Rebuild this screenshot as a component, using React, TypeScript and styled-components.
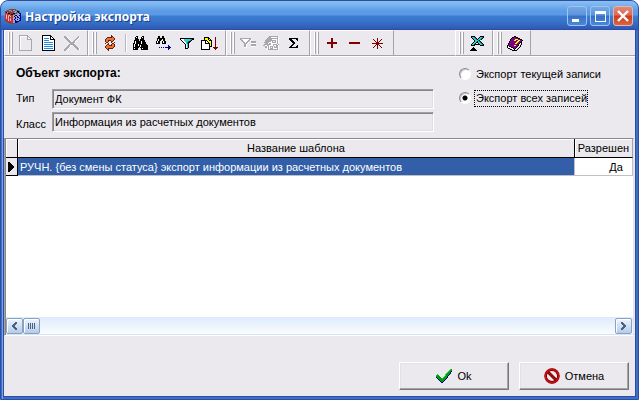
import React from "react";
import styled, { createGlobalStyle } from "styled-components";

const GlobalStyle = createGlobalStyle`
  * { box-sizing: border-box; }
  body { margin: 0; background: #fff; }
  body, button, input { font-family: "Liberation Sans", Arial, sans-serif; font-size: 11px; color: #000; }
`;

const face = "#ebe9ed";

const Window = styled.main`
  display: flex;
  flex-direction: column;
  min-height: 100vh;
  border: 1px solid #2b4da8;
  border-radius: 8px 8px 0 0;
  background: linear-gradient(90deg, #3f6fc4 0 1px, #78a4e0 1px 2px, #3f6fc4 2px);
  overflow: hidden;
`;
const TitleBar = styled.header`
  display: flex;
  align-items: center;
  gap: 4px;
  height: 29px;
  padding: 1px 5px 0 4px;
  background: linear-gradient(#8cc0f0 0, #78b4ee 4px, #5c9ae6 10px, #5c9ae6 14px, #3b7dd2 15px, #3874ca 20px, #2d56b2 29px);
`;
const Title = styled.h1`
  flex: 1;
  margin: 0;
  padding-top: 2px;
  font: bold 12px/18px "Noto Sans", sans-serif;
  color: #fff;
  text-shadow: 1px 1px 0 #1c3f8c;
`;
const Captions = styled.div`
  display: flex;
  gap: 3px;
`;
const CaptionButton = styled.button<{ $close?: boolean }>`
  width: 20px;
  height: 20px;
  padding: 0;
  border: 1px solid ${(p) => (p.$close ? "#e8b4b0" : "#9cc4f4")};
  border-radius: 3px;
  background: ${(p) =>
    p.$close
      ? "linear-gradient(#dc8a80, #e06a50 45%, #cc3c1c 50%, #dc6444)"
      : "linear-gradient(#74a8e4, #5c94dc 45%, #3470c8 50%, #4c88d8)"};
  svg { display: block; }
`;
const Client = styled.div`
  flex: 1;
  display: flex;
  flex-direction: column;
  margin: 0 3px 3px;
  background: ${face};
  outline: 1px solid #2b4da8;
`;
const ToolBar = styled.nav`
  display: flex;
  height: 27px;
  border-bottom: 1px solid #fff;
  box-shadow: inset 0 -1px #a4a3a8;
`;
const Group = styled.div`
  display: flex;
  align-items: center;
  height: 26px;
  padding: 0 4px 0 3px;
  border-left: 1px solid #fff;
  border-right: 1px solid #a4a3a8;
  border-top: 1px solid #fff;
  border-bottom: 1px solid #a4a3a8;
`;
const Grip = styled.span`
  width: 6px;
  height: 22px;
  background: linear-gradient(90deg, #fff 0 1px, #a4a3a8 1px 2px, ${face} 2px 3px, #fff 3px 4px, #a4a3a8 4px 5px, transparent 5px);
`;
const Divider = styled.span`
  width: 8px;
  height: 18px;
  background: linear-gradient(90deg, transparent 4px, #b8b7bc 4px 5px, #fff 5px 6px, transparent 6px);
`;
const Tool = styled.button`
  display: grid;
  place-items: center;
  width: 23px;
  height: 22px;
  padding: 0;
  border: 0;
  background: none;
`;
const Spacer = styled.span`
  width: 61px;
`;
const Form = styled.section`
  display: flex;
  justify-content: space-between;
  padding: 8px 22px 6px 12px;
`;
const Target = styled.fieldset`
  flex: 0 1 418px;
  display: grid;
  grid-template-columns: 36px 1fr;
  row-gap: 3px;
  margin: 0;
  padding: 0;
  border: 0;
`;
const Legend = styled.legend`
  padding: 0 0 8px;
  font-weight: bold;
  font-size: 12px;
  line-height: 16px;
`;
const Label = styled.label`
  line-height: 18px;
  &:last-of-type { padding-top: 4px; line-height: 16px; }
`;
const Field = styled.input`
  min-width: 0;
  height: 20px;
  padding: 0 2px;
  border: 1px solid;
  border-color: #a09fa4 #fff #fff #a09fa4;
  box-shadow: inset 1px 1px #86858c, inset -1px -1px #dcdfe4;
  background: ${face};
  outline: 0;
`;
const Choices = styled.div`
  display: flex;
  flex-direction: column;
  gap: 8px;
  width: 154px;
  padding-top: 1px;
`;
const Choice = styled.label`
  display: flex;
  align-items: center;
  gap: 4px;
  height: 16px;
  white-space: nowrap;
`;
const Radio = styled.input`
  appearance: none;
  flex: none;
  width: 12px;
  height: 12px;
  margin: 0;
  border: 1px solid;
  border-color: #8c8b90 #fff #fff #8c8b90;
  border-radius: 50%;
  background: #fff;
  box-shadow: inset 1px 1px #c4c3c8;
  &:checked { background: radial-gradient(circle, #000 0 2px, #fff 3px); }
`;
const ChoiceText = styled.span<{ $focus?: boolean }>`
  padding: 0 0 0 1px;
  line-height: 15px;
  outline: ${(p) => (p.$focus ? "1px dotted #000" : "0")};
`;
const GridPanel = styled.section`
  flex: 1;
  display: flex;
  flex-direction: column;
  justify-content: space-between;
  margin-right: 1px;
  border-top: 1px solid #8a898f;
  border-left: 1px solid #a4a3a8;
  border-bottom: 1px solid #fff;
  border-right: 1px solid #e0e3ea;
  box-shadow: inset 1px 0 #86858c;
  background: #fff;
  padding-left: 1px;
`;
const Table = styled.table`
  width: 100%;
  table-layout: fixed;
  border-collapse: separate;
  border-spacing: 0;
`;
const Head = styled.th<{ $w?: number }>`
  width: ${(p) => (p.$w ? `${p.$w}px` : "auto")};
  height: 19px;
  padding: 0;
  font-weight: normal;
  line-height: 16px;
  white-space: nowrap;
  overflow: hidden;
  background: ${face};
  border-bottom: 1px solid #000;
  border-right: 1px solid #000;
  box-shadow: inset 1px 1px #fff;
  &:last-child { border-right-color: #a4a3a8; }
`;
const Cell = styled.td<{ $selected?: boolean; $marker?: boolean; $center?: boolean }>`
  height: 18px;
  padding: ${(p) => (p.$center ? "0 0 0 25px" : p.$marker ? "0 0 0 2px" : "0 2px")};
  line-height: 16px;
  white-space: nowrap;
  text-align: ${(p) => (p.$center ? "center" : "left")};
  color: ${(p) => (p.$selected ? "#fff" : "#000")};
  background: ${(p) => (p.$selected ? "#325fa8" : p.$marker ? face : "#fff")};
  border-bottom: 1px solid ${(p) => (p.$marker ? "#000" : "#c0c0c4")};
  border-right: 1px solid ${(p) => (p.$marker ? "#000" : "#c0c0c4")};
  svg { display: block; }
`;
const ScrollBar = styled.div`
  display: flex;
  height: 18px;
  padding: 1px 1px 1px 0;
  border-bottom: 1px solid #d4e4f6;
  background: linear-gradient(#dcebfb, #fafcff);
`;
const ScrollButton = styled.button`
  display: grid;
  place-items: center;
  width: 17px;
  height: 16px;
  padding: 0;
  border: 1px solid #86a2c4;
  border-radius: 2px;
  background: linear-gradient(#eef5fd, #b4cce8);
  box-shadow: inset 1px 1px #fff;
  &:last-child { margin-left: auto; }
`;
const Footer = styled.footer`
  display: flex;
  justify-content: flex-end;
  gap: 10px;
  padding: 26px 6px 6px;
`;
const Action = styled.button`
  display: flex;
  align-items: center;
  justify-content: center;
  gap: 5px;
  width: 110px;
  height: 28px;
  padding: 0;
  border: 1px solid;
  border-color: #fff #78777e #78777e #fff;
  box-shadow: inset -1px -1px #a4a3a8, inset 1px 1px #dfe2e7;
  background: ${face};
`;

const palette: Record<string, string> = {
  k: "#000000", w: "#ffffff", g: "#a8a7ac", b: "#1e8ce8", n: "#000090", o: "#f0702c", O: "#5c2410",
  r: "#800000", y: "#ffff00", c: "#30d0d0", t: "#007c80", p: "#800088", l: "#d0d0d0", G: "#009c10",
  L: "#20d828", R: "#d82828", d: "#585858", s: "#98a4c8", q: "#a02c34", Q: "#e88880", z: "#4d6185",
};

/** Draws small bitmap glyphs; every letter is a palette colour. */
function Glyph({ rows }: { rows: string[] }) {
  const w = Math.max(...rows.map((r) => r.length));
  return (
    <svg width={w} height={rows.length} shapeRendering="crispEdges" aria-hidden="true">
      {rows.flatMap((row, y) =>
        [...row].map((ch, x) =>
          palette[ch] ? <rect key={`${x}-${y}`} x={x} y={y} width="1" height="1" fill={palette[ch]} /> : null
        )
      )}
    </svg>
  );
}

const blank = [
  "ggggggggg....", "gwwwwwwwgg...", "gw......g.g..", "gw......gwwg.", "gw......ggggg", "gw..........g",
  "gw..........g", "gw..........g", "gw..........g", "gw..........g", "gw..........g", "gw..........g",
  "gw..........g", "gw..........g", "gw..........g", "ggggggggggggg",
];
const page = [
  "kkkkkkkkk....", "kwwwwwwwkk...", "kwwwwwwwkwk..", "kwbbbbbwkwwk.", "kwwwwwwwkkkkk", "kwbbbbbwwwwwk",
  "kwwwwwwwwwwwk", "kwbbbbbbbbbwk", "kwwwwwwwwwwwk", "kwbbbbbbbbbwk", "kwwwwwwwwwwwk", "kwbbbbbbbbbwk",
  "kwwwwwwwwwwwk", "kwbbbbbbbbbwk", "kwwwwwwwwwwwk", "kkkkkkkkkkkkk",
];
const remove = [
  "gg............g.", "gggw.........ggw", ".gggw.......ggw.", "..gggw.....ggw..", "...gggw...ggw...", "....gggw.ggw....",
  ".....ggggggw....", "......ggggw.....", ".....gggggg.....", "....ggww.ggg....", "...gggw...ggg...", "..gggw.....ggg..",
  ".gggw.......gggw", "gggw.........ggw", "ggw.............",
];
const refresh = [
  "......O...", "......OO..", "..OOOOOoO.", ".OoooooooO", "OooooooooO", "OooOOOooO.", "OooO..OO..", ".OO...O..O",
  "O..O...OO.", "..OO..OooO", ".OooOOOooO", "OooooooooO", "OoooooooO.", ".OoOOOOO..", "..OO......", "...O......",
];
const binoculars = [
  "...kk....kk....", "..kwk...kwk....", "..kkk...kkk....", "..kkkk.kkkk....", ".kkkkk.kkkkk...", ".kwkkkkkwkkk...",
  ".kwkkkkkwkkkk..", "kkwkkkkkwkkkk..", "kwkkkwkkkkkkkk.", "kwkkkwkwkkkkkkk", "kwkkkkkwkkkkkkk", "kkkkkk.kkkkkkkk",
  "kwkkk...kwkkkkk", "kkkkk...kkkkkkk",
];
const findNext = [
  "..kk..kk.......", "..kk..kk.......", ".kkkkkkkk......", ".kwkkkwkk......", ".kwkk.wkk......", "kwkk..kwkk.....",
  "kwkk..kwkk.....", "kkkk..kkkk.....", "", "............n..", "............nn.", "...n.n.n.nnnnnn", "............nn.", "............n..",
];
const funnel = [
  "kkkkkkkkkkkkkk", "kwwwccccccctkk", ".kwwcccccctk..", "..kwwccctkk...", "...kwwctkk....", "....kwctk.....",
  ".....kwck.....", ".....kwck.....", ".....kwck.....", ".....kwck.....", ".....kkk......",
];
const sort = [
  "...kkkkk......r.", "...kyyykk.....r.", "...kyyykyk....r.", "kkkkkkyykkk...r.", "kwwwkwkyyyk...r.", "kwwwkwwkyyk...r.",
  "kwwwkkkkkyk...r.", "kwwwwwwwkyk...r.", "kwwwwwwwkyk...r.", "kwwwwwwwkkk...r.", "kwwwwwwwk...rrrrr", "kwwwwwwwk....rrr.", "kkkkkkkkk.....r.",
];
const filterEq = [
  "ggggggggggg.....", "ggwwwwwwwggw....", ".ggwwwwwggw.....", "..ggwwwgg..ggggg", "...ggwggw..ggggg", "....gggw...wwwww",
  "....ggw....ggggg", "....ggw....ggggg", "....ggw....wwwww", "....www.........",
];
const formFilter = [
  "......ggggggggg.", ".....gggwwwwwwgw", "....gggggggggggw", "...ggggggwwwwwgw", "..gggggggggggwgw", "..ggggggwg..gwgw",
  ".gggggwwwggggwgw", "..gggwggwwwwwwgw", ".gggggggwwggggwg", "ggwwggwwwwgwwggw", "..ggwgwgggwg.ggw", "..ggwgwgwgwggggw",
  "....wgwgggwwwwgw", "....wggggggggggw",
];
const sigma = [
  "kkkkkkkkk", "kkk....kk", ".kkk....k", "..kkk....", "...kkk...", "....kk...", "...kk....", "..kk....k", ".kk....kk", "kkkkkkkkk",
];
const plus = ["....rr....", "....rr....", "....rr....", "....rr....", "rrrrrrrrrr", "rrrrrrrrrr", "....rr....", "....rr....", "....rr....", "....rr...."];
const minus = ["rrrrrrrrrrr", "rrrrrrrrrrr"];
const star = [
  ".....r.....", ".r...r...r.", "..r..r..r..", "...r.r.r...", "....rrr....", "rrrrrrrrrrr", "....rrr....", "...r.r.r...", "..r..r..r..", ".r...r...r.", ".....r.....",
];
const excel = [
  ".kkkk.....kkkk", ".kcctk...kcctk", "..kcctk.kcctk.", "...kcctkcctk..", "....kccctk....", "....kcckctk...", "...kcckkcctk..",
  "..kcck..kcctk.", ".kcckkkkkkcctk", ".kkkk.....kkkk", "", "...k..........", "..kkk.........", ".kkkkk........", "kkkkkkk.......",
];
const book = [
  ".......kk.......", ".....kkppkk.....", "....kppppppkk...", "...kppppyyyppkk.", "...kpppyyppyyppk", "..kpppppppyyppk.",
  "..kppppppyyppkk.", ".kppppppyyppkwk.", ".kpppppppppkwlk.", "kppppppyyppkwk..", "kwkkppppppkwlk..", "kwwwkkpppkwlk...",
  ".kklwwkpkwlk....", "...kklwkwlk.....", ".....kkkkk......",
];
const check = [
  "..............LG", ".............LGG", "............LGGn", "...........LGGn.", "..........LGGGn.", ".L.......LGGGn..", "LGG......LGGn...",
  "GGGG....LGGn....", "nGGGG..LGGGn....", ".nGGGGLGGGn.....", "..nGGGGGGn......", "...nGGGGn.......", "....nGGn........", ".....nn.........",
];
const appIcon = [
  "....ddqqqdd.....", "..ddQQqqssddd...", "ddqqddQqddsskkd.", "dkQddqqddssddkd.", "RRRkkqqqkkddssnn", "RQRRRRkkddsssssn",
  "RlRQlRRRssnnssnn", "RlRlRlRRsnssnssn", "RlRlRRRRssksnnsn", "RlRQRQRRssnsssnn", "RRRlRlRRsnssnssn", "qRRlRlRRssnsssnn",
  ".dqRRRRRssnnnn..", "...dqqRRssnnd...", ".....ddddd......",
];
const marker = ["kk....", "kkk...", "kkkk..", "kkkkk.", "kkkkkk", "kkkkkk", "kkkkk.", "kkkk..", "kkk...", "kk...."];
const left = ["...zz", "..zzz", ".zzz.", "zzz..", "zzz..", ".zzz.", "..zzz", "...zz"];
const right = left.map((r) => [...r].reverse().join(""));

function Tools({ items }: { items: [string, string[]][] }) {
  return (
    <>
      {items.map(([name, rows]) => (
        <Tool key={name} type="button" aria-label={name}><Glyph rows={rows} /></Tool>
      ))}
    </>
  );
}

export default function App() {
  return (
    <>
      <GlobalStyle />
      <Window>
        <TitleBar>
          <Glyph rows={appIcon} />
          <Title>Настройка экспорта</Title>
          <Captions>
            <CaptionButton type="button" aria-label="Свернуть">
              <svg width="18" height="18"><path d="M4 13.5h7" stroke="#fff" strokeWidth="3" /></svg>
            </CaptionButton>
            <CaptionButton type="button" aria-label="Развернуть">
              <svg width="18" height="18" shapeRendering="crispEdges"><path d="M4 4h11v11H4zM5 7v7h9V7z" fill="#fff" fillRule="evenodd" /></svg>
            </CaptionButton>
            <CaptionButton type="button" $close aria-label="Закрыть">
              <svg width="18" height="18"><path d="M4 4l10 10M14 4L4 14" stroke="#fff" strokeWidth="2.4" /></svg>
            </CaptionButton>
          </Captions>
        </TitleBar>
        <Client>
          <ToolBar aria-label="Панель инструментов">
            <Group><Grip /><Tools items={[["Новый", blank], ["Открыть", page], ["Удалить", remove]]} /></Group>
            <Group>
              <Grip /><Tools items={[["Обновить", refresh]]} /><Divider />
              <Tools items={[["Найти", binoculars], ["Найти далее", findNext], ["Фильтр", funnel], ["Сортировка", sort]]} />
            </Group>
            <Group><Grip /><Tools items={[["Фильтр по значению", filterEq], ["Фильтр по форме", formFilter], ["Сумма", sigma]]} /></Group>
            <Group><Grip /><Tools items={[["Отметить", plus], ["Снять отметку", minus], ["Обратить отметки", star]]} /></Group>
            <Spacer />
            <Group><Grip /><Tools items={[["Excel", excel]]} /></Group>
            <Group><Grip /><Tools items={[["Справка", book]]} /></Group>
          </ToolBar>
          <Form>
            <Target>
              <Legend>Объект экспорта:</Legend>
              <Label htmlFor="type">Тип</Label>
              <Field id="type" readOnly value="Документ ФК" />
              <Label htmlFor="class">Класс</Label>
              <Field id="class" readOnly value="Информация из расчетных документов" />
            </Target>
            <Choices role="radiogroup">
              <Choice><Radio type="radio" name="scope" /><ChoiceText>Экспорт текущей записи</ChoiceText></Choice>
              <Choice><Radio type="radio" name="scope" defaultChecked /><ChoiceText $focus>Экспорт всех записей</ChoiceText></Choice>
            </Choices>
          </Form>
          <GridPanel>
            <Table>
              <thead>
                <tr><Head $w={12} /><Head>Название шаблона</Head><Head $w={58}>Разрешен</Head></tr>
              </thead>
              <tbody>
                <tr>
                  <Cell $marker><Glyph rows={marker} /></Cell>
                  <Cell $selected>РУЧН. {"{без смены статуса}"} экспорт информации из расчетных документов</Cell>
                  <Cell $center>Да</Cell>
                </tr>
              </tbody>
            </Table>
            <ScrollBar>
              <ScrollButton type="button" aria-label="Влево"><Glyph rows={left} /></ScrollButton>
              <ScrollButton type="button" aria-label="Ползунок"><Glyph rows={["z.z.z.z", "z.z.z.z", "z.z.z.z", "z.z.z.z", "z.z.z.z", "z.z.z.z"]} /></ScrollButton>
              <ScrollButton type="button" aria-label="Вправо"><Glyph rows={right} /></ScrollButton>
            </ScrollBar>
          </GridPanel>
          <Footer>
            <Action type="button"><Glyph rows={check} />Ok</Action>
            <Action type="button">
              <svg width="16" height="16" aria-hidden="true">
                <circle cx="8" cy="8" r="6.4" fill="none" stroke="#600" strokeWidth="2.6" />
                <path d="M4 4l8 8" stroke="#600" strokeWidth="3" />
                <circle cx="8" cy="8" r="6.6" fill="none" stroke="#d00c0c" strokeWidth="1.6" />
                <path d="M4 4l8 8" stroke="#b00808" strokeWidth="1.6" />
              </svg>
              Отмена
            </Action>
          </Footer>
        </Client>
      </Window>
    </>
  );
}
